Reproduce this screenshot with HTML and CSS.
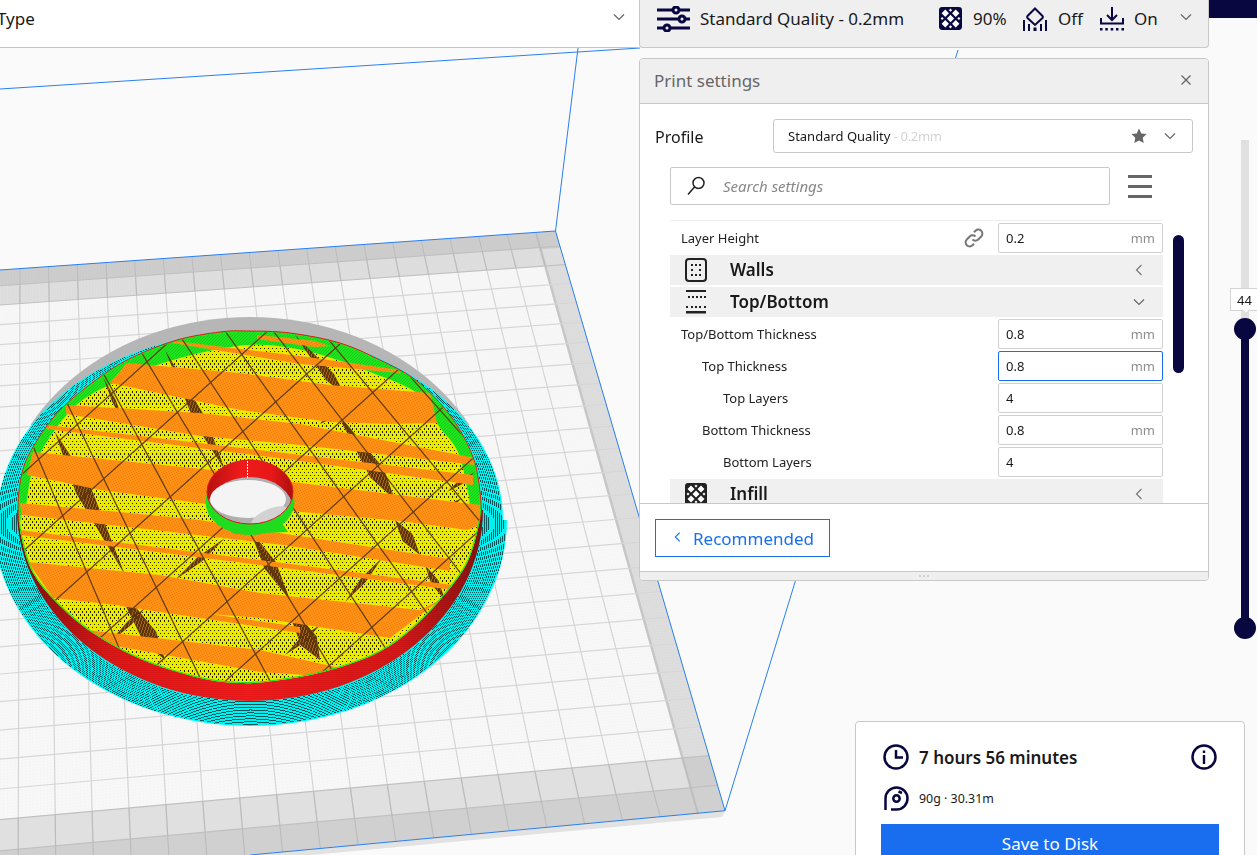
FILE: index.html
```html
<!DOCTYPE html>
<html lang="en">
<head>
<meta charset="utf-8">
<title>Print settings</title>
<link rel="stylesheet" href="styles.css">
</head>
<body>
<canvas id="scene" class="scene" width="1257" height="855"></canvas>

<header class="viewbar">
  <span class="viewbar-label">Type</span>
  <svg class="chev" viewBox="0 0 12 8"><path d="M1 1.500l5 5 5-5"/></svg>
</header>

<div class="corner-block"></div>

<section class="summary">
  <svg class="i-sliders" viewBox="0 0 33 26"><g class="navy-line"><path d="M0 4h15M23 4h10M0 13h21M29 13h4M0 22h6M14 22h19"/><circle cx="19" cy="4" r="3"/><circle cx="25" cy="13" r="3"/><circle cx="10" cy="22" r="3"/></g></svg>
  <span class="summary-profile">Standard Quality - 0.2mm</span>
  <svg class="i-22" viewBox="0 0 22 22"><rect class="navy-fill" width="22" height="22" rx="3"/><path class="white-fill" d="M6 2.500L9.500 6 6 9.500 2.500 6zM16 2.500L19.500 6 16 9.500 12.500 6zM11 7.500l3.500 3.500-3.500 3.500L7.500 11zM6 12.500L9.500 16 6 19.500 2.500 16zM16 12.500l3.500 3.500-3.500 3.500-3.500-3.500zM11 1.500L12.500 3 11 4.500 9.500 3zM11 17.500l1.500 1.500-1.500 1.500L9.500 19zM3 9.500L4.500 11 3 12.500 1.500 11zM19 9.500l1.500 1.500-1.500 1.500-1.500-1.500z"/></svg>
  <span class="summary-val v-infill">90%</span>
  <svg class="i-24" viewBox="0 0 24 24"><g class="navy-line thin"><path d="M12 1.500l7.500 7.500a1.500 1.500 0 0 1 0 2L12 18 4.500 11a1.500 1.500 0 0 1 0-2z"/></g><path class="navy-fill" d="M0 13h2v11H0zM5 17h2v7H5zM10.500 20.500h3V24h-3zM17 17h2v7h-2zM22 13h2v11h-2z"/></svg>
  <span class="summary-val v-support">Off</span>
  <svg class="i-24" viewBox="0 0 24 24"><g class="navy-line thin"><path d="M12 0v12M7 8l5 5 5-5M1 11v5.500h22V11"/></g><path class="navy-fill" d="M0 21h2.500v2.500H0zM5.300 21h2.500v2.500H5.300zM10.700 21h2.500v2.500h-2.500zM16 21h2.500v2.500H16zM21.500 21H24v2.500h-2.500z"/></svg>
  <span class="summary-val v-adhesion">On</span>
  <svg class="chev chev-summary" viewBox="0 0 12 8"><path d="M1 1.500l5 5 5-5"/></svg>
</section>

<section class="panel">
  <div class="panel-head">
    <span class="panel-title">Print settings</span>
    <svg class="close" viewBox="0 0 10 10"><path d="M.5.500l9 9M9.500.500l-9 9"/></svg>
  </div>
  <div class="panel-body">
    <div class="profile-row">
      <span class="profile-label">Profile</span>
      <div class="select">
        <span class="select-name">Standard Quality<span class="select-dim"> - 0.2mm</span></span>
        <svg class="star" viewBox="0 0 16 16"><path d="M8 .6l2.300 4.900 5.300.6-3.900 3.700 1 5.300L8 12.500l-4.700 2.600 1-5.300L.4 6.100l5.300-.6z"/></svg>
        <svg class="chev" viewBox="0 0 12 8"><path d="M1 1.500l5 5 5-5"/></svg>
      </div>
    </div>
    <div class="search-row">
      <div class="search">
        <svg class="i-search" viewBox="0 0 20 20"><circle cx="12.500" cy="7" r="5.500"/><path d="M8.500 11L2 18.500"/></svg>
        <span class="search-hint">Search settings</span>
      </div>
      <div class="menu"><i></i><i></i><i></i></div>
    </div>
    <div class="list-wrap">
      <div class="list">
        <div class="row">
          <span class="row-label">Layer Height</span>
          <svg class="i-link" viewBox="0 0 20 20"><path d="M8.500 11.500a4 4 0 0 0 5.700 0l3-3a4 4 0 0 0-5.700-5.700L10 4.300M11.500 8.500a4 4 0 0 0-5.700 0l-3 3a4 4 0 0 0 5.700 5.700l1.500-1.500"/></svg>
          <div class="field"><span>0.2</span><span class="unit">mm</span></div>
        </div>
        <div class="group">
          <svg class="g-icon" viewBox="0 0 22 24"><rect class="g-frame" x="1" y="1" width="20" height="22" rx="3"/><path class="g-dots" d="M6 6h2v2H6zM10 6h2v2h-2zM14 6h2v2h-2zM6 11h2v2H6zM14 11h2v2h-2zM6 16h2v2H6zM10 16h2v2h-2zM14 16h2v2h-2z"/></svg>
          <span class="group-name">Walls</span>
          <svg class="chev-left" viewBox="0 0 8 12"><path d="M6.500 1l-5 5 5 5"/></svg>
        </div>
        <div class="group">
          <svg class="g-icon" viewBox="0 0 22 24"><path class="g-dots" d="M1 0h20v2H1zM3 6h2v2H3zM7 6h2v2H7zM11 6h2v2h-2zM15 6h2v2h-2zM19 6h2v2h-2zM1 16h2v2H1zM6 16h2v2H6zM10 16h2v2h-2zM14 16h2v2h-2zM19 16h2v2h-2zM1 21h20v2.500H1z"/></svg>
          <span class="group-name">Top/Bottom</span>
          <svg class="chev" viewBox="0 0 12 8"><path d="M1 1.500l5 5 5-5"/></svg>
        </div>
        <div class="row">
          <span class="row-label">Top/Bottom Thickness</span>
          <div class="field"><span>0.8</span><span class="unit">mm</span></div>
        </div>
        <div class="row">
          <span class="row-label indent1">Top Thickness</span>
          <div class="field field-active"><span>0.8</span><span class="unit">mm</span></div>
        </div>
        <div class="row">
          <span class="row-label indent2">Top Layers</span>
          <div class="field"><span>4</span></div>
        </div>
        <div class="row">
          <span class="row-label indent1">Bottom Thickness</span>
          <div class="field"><span>0.8</span><span class="unit">mm</span></div>
        </div>
        <div class="row">
          <span class="row-label indent2">Bottom Layers</span>
          <div class="field"><span>4</span></div>
        </div>
        <div class="group">
          <svg class="g-icon" viewBox="0 0 22 22"><rect class="g-fill" width="22" height="22" rx="3"/><path class="white-fill" d="M6 2.500L9.500 6 6 9.500 2.500 6zM16 2.500L19.500 6 16 9.500 12.500 6zM11 7.500l3.500 3.500-3.500 3.500L7.500 11zM6 12.500L9.500 16 6 19.500 2.500 16zM16 12.500l3.500 3.500-3.500 3.500-3.500-3.500zM11 1.500L12.500 3 11 4.500 9.500 3zM11 17.500l1.500 1.500-1.500 1.500L9.500 19zM3 9.500L4.500 11 3 12.500 1.500 11zM19 9.500l1.500 1.500-1.500 1.500-1.500-1.500z"/></svg>
          <span class="group-name">Infill</span>
          <svg class="chev-left" viewBox="0 0 8 12"><path d="M6.500 1l-5 5 5 5"/></svg>
        </div>
      </div>
      <div class="scrollbar"></div>
    </div>
  </div>
  <div class="panel-foot">
    <div class="rec-btn">
      <svg class="rec-chev" viewBox="0 0 8 12"><path d="M6.500 1l-5 5 5 5"/></svg>
      <span>Recommended</span>
    </div>
  </div>
  <div class="handle"><i></i><i></i><i></i></div>
</section>

<aside class="layer-slider">
  <div class="track-light"></div>
  <div class="track-dark"></div>
  <div class="knob"></div>
  <div class="knob knob-low"></div>
  <div class="layer-tag">44</div>
</aside>

<section class="estimate">
  <div class="est-row">
    <svg class="i-26" viewBox="0 0 26 26"><g class="navy-line thin2"><circle cx="13" cy="13" r="11.500"/><path d="M13 6v7.500h7"/></g></svg>
    <span class="est-time">7 hours 56 minutes</span>
    <svg class="i-26 est-info" viewBox="0 0 26 26"><circle class="navy-line thin2" cx="13" cy="13" r="11.500"/><path class="navy-fill" d="M11.800 6.500h2.400v2.600h-2.400zM11.800 11h2.400v9h-2.400z"/></svg>
  </div>
  <div class="est-row est-row-2">
    <svg class="i-26" viewBox="0 0 26 26"><g class="navy-line thin2"><path d="M2.500 25V13.500A11 11 0 1 1 13.500 24.500H8"/><circle cx="13.500" cy="13.500" r="3.200"/><path d="M15.500 6.500l3.500 1.500"/></g></svg>
    <span class="est-weight">90g · 30.31m</span>
  </div>
  <div class="save-btn">Save to Disk</div>
</section>

<script src="scene.js"></script>
</body>
</html>
```
FILE: styles.css
```css
* { box-sizing: border-box; }
html, body { margin: 0; height: 100%; }
body {
  position: relative;
  width: 1257px;
  height: 855px;
  overflow: hidden;
  background: #fafafa;
  font-family: "Noto Sans", sans-serif;
  color: #191919;
}
svg { display: block; flex: none; }
.scene { position: absolute; left: 0; top: 0; display: block; }

.chev { width: 12px; height: 8px; fill: none; stroke: #666; stroke-width: 1.200; }
.chev-left { width: 8px; height: 12px; fill: none; stroke: #777; stroke-width: 1.200; }
.navy-line { fill: none; stroke: #08073f; stroke-width: 3; }
.navy-line.thin { stroke-width: 2; }
.navy-line.thin2 { stroke-width: 2.500; }
.navy-fill { fill: #08073f; }
.white-fill { fill: #fff; }

.viewbar {
  position: absolute; left: 0; top: 0;
  width: 640px; height: 48px;
  display: flex; justify-content: space-between; align-items: center;
  padding: 0 15px 10px 0;
  background: #fff;
  border-bottom: 1px solid #c4c4c4;
  font-size: 17px;
}
.viewbar-label { margin-left: -3px; }
.viewbar .chev { margin-top: -3px; }
.corner-block { position: absolute; left: 1209px; top: 0; width: 48px; height: 18px; background: #08073f; }

.summary {
  position: absolute; left: 639px; top: 0;
  width: 570px; height: 48px;
  display: flex; align-items: center;
  padding: 0 0 10px 17px;
  background: #efefef;
  border: 1px solid #c8c8c8; border-top: 0;
  border-radius: 0 0 4px 4px;
  font-size: 17px;
}
.i-sliders { width: 33px; height: 26px; }
.summary-profile { margin-left: 10px; width: 239px; }
.i-22 { width: 23px; height: 23px; }
.i-24 { width: 24px; height: 24px; }
.summary-val { margin-left: 11px; }
.v-infill { width: 50px; }
.v-support { width: 42px; }
.v-adhesion { width: 46px; margin-left: 10px; }
.chev-summary { margin-top: -3px; }

.panel {
  position: absolute; left: 639px; top: 58px;
  width: 570px; height: 523px;
  display: flex; flex-direction: column;
  background: #fff;
  border: 1px solid #c8c8c8;
  border-radius: 4px;
  overflow: hidden;
}
.panel-head {
  height: 45px; flex: none;
  display: flex; justify-content: space-between; align-items: center;
  padding: 0 17px 2px 14px;
  background: #efefef;
  border-bottom: 1px solid #c8c8c8;
  font-size: 17px; color: #666;
}
.close { width: 10px; height: 10px; fill: none; stroke: #666; stroke-width: 1.300; }
.panel-body { flex: 1 1 0; min-height: 0; display: flex; flex-direction: column; }
.profile-row { display: flex; align-items: center; padding: 15px 15px 0; }
.profile-label { width: 118px; font-size: 16px; padding-top: 2px; }
.select {
  flex: 1; height: 34px;
  display: flex; align-items: center;
  padding: 0 16px 0 14px;
  border: 1px solid #c8c8c8; border-radius: 3px;
  font-size: 13px;
}
.select-name { flex: 1; }
.select-dim { color: #d4d4d4; letter-spacing: -.3px; }
.star { width: 16px; height: 16px; fill: #666; margin-right: 17px; }

.search-row { display: flex; align-items: center; padding: 14px 0 0 30px; }
.search {
  width: 440px; height: 38px;
  display: flex; align-items: center;
  padding-left: 15px;
  border: 1px solid #c8c8c8; border-radius: 2px;
}
.i-search { width: 20px; height: 20px; fill: none; stroke: #222; stroke-width: 1.500; }
.search-hint { margin-left: 17px; font-size: 15px; font-style: italic; color: #888; }
.menu { margin-left: 18px; width: 24px; display: flex; flex-direction: column; gap: 7px; }
.menu i { display: block; height: 3px; background: #666; }

.list-wrap { flex: 1; min-height: 0; display: flex; margin-top: 15px; padding-left: 30px; }
.list {
  width: 493px; height: 100%;
  display: flex; flex-direction: column;
  overflow: hidden;
  border-top: 1px solid #eee; padding-top: 1px;
}
.scrollbar { width: 11px; height: 138px; margin: 15px 0 0 10px; border-radius: 6px; background: #08073f; }
.row { height: 32px; flex: none; display: flex; align-items: center; font-size: 13px; }
.row-label { flex: 1; padding-left: 11px; color: #222; }
.indent1 { padding-left: 32px; }
.indent2 { padding-left: 53px; }
.i-link { width: 20px; height: 20px; margin-right: 14px; fill: none; stroke: #777; stroke-width: 2; }
.field {
  width: 165px; height: 30px;
  display: flex; justify-content: space-between; align-items: center;
  padding: 0 7px;
  border: 1px solid #d0d0d0; border-radius: 2px;
}
.field-active { border-color: #196ef0; }
.unit { color: #8f8f8f; }
.group {
  height: 30px; flex: none; margin: 1px 0;
  display: flex; align-items: center;
  padding: 0 18px 0 15px;
  background: #f0f0f0;
}
.g-icon { width: 22px; height: 24px; }
.g-frame { fill: none; stroke: #222; stroke-width: 2; }
.g-dots { fill: #222; }
.g-fill { fill: #222; }
.group-name { flex: 1; margin-left: 23px; font-size: 17px; font-weight: 600; line-height: 1; margin-bottom: 2px; }
.group .chev-left { margin-right: 2px; }

.panel-foot {
  height: 68px; flex: none;
  padding: 15px 0 0 15px;
  background: #fff;
  border-top: 1px solid #c8c8c8;
}
.rec-btn {
  width: 175px; height: 38px;
  display: flex; align-items: center;
  padding-left: 18px;
  border: 1px solid #196ef0;
  font-size: 17px; color: #196ef0;
}
.rec-chev { width: 7px; height: 12px; margin: -2px 12px 0 0; fill: none; stroke: #196ef0; stroke-width: 1.300; }
.handle {
  height: 9px; flex: none;
  display: flex; justify-content: center; align-items: center; gap: 2px;
  background: #efefef;
  border-top: 1px solid #c8c8c8;
}
.handle i { width: 2px; height: 2px; background: #d0d0d0; }

.layer-slider { position: absolute; left: 1230px; top: 140px; width: 27px; height: 500px; }
.track-light { position: absolute; left: 11px; top: 0; width: 8px; height: 190px; background: #e0e0e0; }
.track-dark { position: absolute; left: 11px; top: 189px; width: 8px; height: 300px; background: #08073f; }
.knob { position: absolute; left: 4px; top: 178px; width: 22px; height: 22px; border-radius: 50%; background: #08073f; }
.knob-low { top: 477px; }
.layer-tag {
  position: absolute; left: 0; top: 148px;
  width: 30px; height: 23px;
  display: flex; align-items: center; justify-content: center;
  padding-right: 1px;
  background: #fff;
  border: 1px solid #d4d4d4;
  font-size: 13px;
}
.layer-tag::after {
  content: ""; position: absolute; left: 12px; bottom: -3px;
  width: 5px; height: 5px;
  background: #fff;
  border: solid #d4d4d4; border-width: 0 1px 1px 0;
  transform: rotate(45deg);
}

.estimate {
  position: absolute; left: 855px; top: 721px;
  width: 390px; height: 160px;
  padding: 22px 25px 0;
  background: #fff;
  border: 1px solid #c8c8c8; border-radius: 4px;
}
.est-row { display: flex; align-items: center; gap: 10px; height: 26px; }
.est-row-2 { margin-top: 15px; }
.i-26 { width: 26px; height: 26px; margin-left: 2px; }
.est-time { flex: 1; font-size: 17px; font-weight: 600; }
.est-info { margin: 0 2px 0 0; }
.est-weight { font-size: 12.400px; }
.save-btn {
  height: 40px; margin-top: 13px;
  padding-top: 8px;
  text-align: center;
  background: #196ef0; color: #fff;
  font-size: 17px;
}
```
FILE: scene.js
```js
(function () {
  var c = document.getElementById('scene');
  var g = c.getContext('2d', { willReadFrequently: true });
  var W = 1257, H = 855;

  function poly(p, color) {
    g.beginPath();
    g.moveTo(p[0][0], p[0][1]);
    for (var i = 1; i < p.length; i++) g.lineTo(p[i][0], p[i][1]);
    g.closePath();
    if (color) { g.fillStyle = color; g.fill(); }
  }
  function line(x1, y1, x2, y2, color, w) {
    g.strokeStyle = color; g.lineWidth = w || 1;
    g.beginPath(); g.moveTo(x1, y1); g.lineTo(x2, y2); g.stroke();
  }
  function curve(p) {
    var n = p.length;
    g.beginPath();
    g.moveTo(p[0][0], p[0][1]);
    for (var i = 0; i < n; i++) {
      var a = p[(i - 1 + n) % n], b = p[i], d = p[(i + 1) % n], e = p[(i + 2) % n];
      g.bezierCurveTo(b[0] + (d[0] - a[0]) / 6, b[1] + (d[1] - a[1]) / 6,
                      d[0] - (e[0] - b[0]) / 6, d[1] - (e[1] - b[1]) / 6, d[0], d[1]);
    }
    g.closePath();
  }

  /* ---------- background and build plate ---------- */
  g.fillStyle = '#fafafa';
  g.fillRect(0, 0, W, H);

  poly([[-100, 285], [555.5, 231], [725, 810.7], [722, 817], [-100, 893]], '#e2e2e2');

  function kline(k) {
    var tx = 20 + 28.66 * k, bx = 18.3 + 36.9 * k;
    return { t: [tx, 270 - 0.0703 * tx], b: [bx, 819 - 0.0894 * bx] };
  }
  function kx(k, y) {
    var l = kline(k);
    return l.t[0] + (y - l.t[1]) * (l.b[0] - l.t[0]) / (l.b[1] - l.t[1]);
  }
  function hy(n) { return 1 / (4.1425e-4 + 5.05e-6 * n) - 1656; }
  function hline(n) {
    var y = hy(n), x = kx(18, y);
    return { x: x, y: y, s: (y + 1670) / (x - 27600) };
  }
  function hAt(n, x) { var h = hline(n); return h.y + h.s * (x - h.x); }

  g.save();
  poly([[-100, 277], [555.5, 231], [725, 810.7], [-100, 887]]);
  g.clip();
  g.fillStyle = '#dedede';
  g.fillRect(0, 0, W, H);

  function rowBand(n1, n2, color) {
    poly([[-100, hAt(n1, -100)], [900, hAt(n1, 900)], [900, hAt(n2, 900)], [-100, hAt(n2, -100)]], color);
  }
  rowBand(22, 30, '#cdcdcd');
  rowBand(-6, -1, '#d0d0d0');
  rowBand(-1, 0, '#e0e0e0');

  // printable area
  var a = hline(21), b = hline(0);
  poly([[-100, hAt(21, -100)], [a.x, a.y], [b.x, b.y], [-100, hAt(0, -100)]], '#f8f8f8');
  // corner tile
  var m = hline(-1);
  poly([[b.x, b.y], [740, hAt(0, 740)], [740, hAt(-1, 740)], [m.x, m.y]], '#cecece');
  var t = hline(23);
  poly([[t.x, t.y], [600, hAt(23, 600)], [600, hAt(21.900, 600)], [hline(21.900).x, hline(21.900).y]], '#cdcdcd');

  var i, n, l, f;
  // faint subdivision
  for (i = -10; i < 190; i++) {
    if (i % 10 === 0) continue;
    l = kline(i / 10);
    line(l.t[0], l.t[1], l.b[0], l.b[1], 'rgba(0,0,0,0.012)', 1);
  }
  for (i = 0; i < 210; i++) {
    if (i % 10 === 0) continue;
    f = i / 10;
    line(-100, hAt(f, -100), 700, hAt(f, 700), 'rgba(0,0,0,0.012)', 1);
  }
  // main grid
  for (i = -1; i <= 18; i++) {
    l = kline(i);
    var dx = l.b[0] - l.t[0], dy = l.b[1] - l.t[1];
    line(l.t[0] - dx * 0.2, l.t[1] - dy * 0.2, l.b[0] + dx * 0.2, l.b[1] + dy * 0.2, i === 18 ? '#c6c6c6' : '#d4d4d4', i === 18 ? 2.500 : 1.200);
  }
  for (n = -2; n <= 23; n++) {
    line(-100, hAt(n, -100), 900, hAt(n, 900), (n < 1 || n > 20) ? '#c0c0c0' : '#d6d6d6', 1.200);
  }
  // lines over the border bands are darker
  g.save();
  rowBand(21, 30); g.clip();
  for (i = -1; i <= 18; i++) { l = kline(i); line(l.t[0], l.t[1], l.b[0], l.b[1], '#bcbcbc', 1.200); }
  g.restore();
  g.save();
  rowBand(-6, 0); g.clip();
  for (i = -1; i <= 18; i++) {
    l = kline(i);
    dx = l.b[0] - l.t[0]; dy = l.b[1] - l.t[1];
    line(l.b[0] - dx * 0.1, l.b[1] - dy * 0.1, l.b[0] + dx * 0.2, l.b[1] + dy * 0.2, '#bcbcbc', 1.200);
  }
  g.restore();
  g.restore();

  /* ---------- brim, skirt and part ---------- */
  // outer grey ring
  g.save();
  g.beginPath(); g.rect(0, 300, 520, 125); g.clip();
  g.beginPath(); g.ellipse(250, 524, 250, 207, 0, 0, Math.PI * 2);
  g.fillStyle = '#b6b6b6'; g.fill();
  g.restore();

  // skirt: different radii above and below the widest line
  g.beginPath();
  g.ellipse(250, 520, 257, 206, 0, 0, Math.PI);
  g.ellipse(250, 520, 253, 188, 0, Math.PI, Math.PI * 2);
  g.closePath();
  g.fillStyle = 'rgb(0,255,255)'; g.fill();

  // outer wall
  g.beginPath();
  g.ellipse(250, 510, 233, 191, 0, 0, Math.PI);
  g.closePath();
  var wg = g.createLinearGradient(17, 0, 483, 0);
  wg.addColorStop(0, '#7d1212'); wg.addColorStop(0.06, '#a01010'); wg.addColorStop(0.2, '#e41414');
  wg.addColorStop(0.5, '#fa1818'); wg.addColorStop(0.82, '#dc1414'); wg.addColorStop(0.92, '#b21212'); wg.addColorStop(1, '#851010');
  g.fillStyle = wg; g.fill();

  var surf = [[18, 507], [22, 473], [33, 447], [60, 410], [100, 377], [133, 357], [177, 340], [220, 332], [247, 331], [290, 333], [340, 343], [380, 360], [413, 378], [440, 403], [460, 430], [473, 457], [478, 477], [481, 503], [480, 520], [467, 563], [440, 600], [407, 633], [373, 655], [323, 672], [273, 681], [240, 683], [200, 678], [143, 660], [93, 633], [57, 603], [33, 573], [22, 540]];

  var ORANGE = 'rgb(255,144,20)', BROWN = 'rgb(92,52,10)';
  curve(surf);
  g.fillStyle = 'rgb(30,230,30)'; g.fill();
  g.save();
  g.clip();

  // solid infill zone
  var yellow = [[22, 545], [27, 500], [33, 470], [50, 437], [80, 402], [125, 378], [180, 358], [250, 345], [310, 352], [370, 372], [420, 395], [438, 425], [458, 452], [468, 492], [476, 525], [520, 600], [300, 760], [60, 700]];
  curve(yellow); g.fillStyle = 'rgb(234,234,0)'; g.fill();

  // spindle shaped gaps between the infill lines
  function spindle(x1, y1, x2, y2, w, at) {
    var dx = x2 - x1, dy = y2 - y1, q = Math.sqrt(dx * dx + dy * dy);
    var nx = -dy / q * w / 2, ny = dx / q * w / 2;
    var mx = x1 + dx * at, my = y1 + dy * at;
    poly([[x1, y1], [mx + nx, my + ny], [x2, y2], [mx - nx, my - ny]], BROWN);
  }
  [
    [165, 350, 225, 470, 12, 0.6], [103, 377, 125, 425, 4, 0.5],
    [55, 432, 125, 575, 16, 0.4], [113, 580, 165, 660, 16, 0.7],
    [295, 335, 345, 395, 10, 0.7], [335, 410, 395, 500, 16, 0.7],
    [250, 530, 290, 600, 13, 0.5], [283, 597, 320, 660, 18, 0.7],
    [395, 520, 420, 555, 12, 0.5], [425, 565, 445, 600, 8, 0.5],
    [175, 580, 225, 538, 6, 0.5], [107, 645, 145, 608, 5, 0.6],
    [345, 602, 382, 558, 6, 0.5], [285, 655, 320, 625, 6, 0.5],
    [320, 424, 357, 393, 8, 0.3], [447, 492, 475, 472, 5, 0.5], [430, 520, 462, 498, 6, 0.5]
  ].forEach(function (w) { spindle(w[0], w[1], w[2], w[3], w[4], w[5]); });

  // solid skin bands
  [
    [[173, 341], [300, 356], [400, 370], [400, 373], [300, 364], [173, 343]],
    [[257, 335], [315, 341], [330, 346], [315, 347], [257, 339]],
    [[127, 363], [240, 373], [330, 385], [430, 393], [437, 423], [387, 424], [330, 422], [240, 410], [110, 383]],
    [[66, 405], [200, 413], [300, 424], [475, 458], [475, 465], [300, 445], [200, 436], [66, 414]],
    [[47, 425], [293, 454], [473, 475], [473, 485], [293, 460], [47, 429]],
    [[33, 452], [213, 470], [293, 482], [480, 505], [480, 525], [467, 530], [400, 521], [290, 511], [213, 505], [100, 490], [27, 475]],
    [[20, 503], [120, 512], [200, 520], [260, 530], [450, 559], [450, 571], [283, 545], [180, 533], [22, 515]],
    [[20, 530], [260, 560], [453, 585], [453, 590], [260, 565], [20, 535]],
    [[28, 562], [160, 575], [260, 593], [420, 610], [440, 600], [390, 638], [260, 618], [160, 610], [53, 598]],
    [[120, 601], [300, 627], [300, 633], [120, 606]],
    [[87, 630], [260, 650], [340, 668], [320, 676], [260, 672], [110, 645]]
  ].forEach(function (p) { poly(p, ORANGE); });

  // thin cross-hatched infill lines
  var col = 'rgb(100,62,14)';
  for (var x0 = -60; x0 < 560; x0 += 58) {
    var sl = 0.37 + 0.001 * x0;
    line(x0 - sl * 200, 300, x0 + sl * 200, 700, col, 1.300);
  }
  for (var c0 = 260; c0 < 1000; c0 += 78) {
    line(0, c0, 500, c0 - 450, col, 1.300);
  }

  // green rim
  curve(surf);
  g.strokeStyle = 'rgb(30,230,30)'; g.lineWidth = 2; g.stroke();
  g.restore();

  // red perimeter on the far side
  g.save();
  g.beginPath(); g.rect(0, 300, 520, 220); g.clip();
  curve(surf); g.strokeStyle = '#e01818'; g.lineWidth = 1; g.stroke();
  g.restore();

  // pixel textures
  var im = g.getImageData(0, 0, W, H), d = im.data;
  var y, x, p, r, gg, bb;
  for (y = 300; y < 740; y++) {
    for (x = 0; x < 520; x++) {
      p = (y * W + x) * 4; r = d[p]; gg = d[p + 1]; bb = d[p + 2];
      if (r === 234 && gg === 234 && bb === 0) {
        var row = Math.floor(y / 3.100);
        var ox = row % 2 ? 2 : 0;
        if ((x + ox) % 4 === 0 && y - row * 3.100 < 1.400) {
          d[p] = 30; d[p + 1] = 30; d[p + 2] = 0;
        }
      } else if (r === 255 && gg === 144 && bb === 20) {
        if ((x + y * 2) % 5 === 0) { d[p] = 236; d[p + 1] = 128; d[p + 2] = 14; }
      } else if (r === 92 && gg === 52 && bb === 10) {
        if ((x + Math.floor(y / 3)) % 3 === 0) { d[p] = 165; d[p + 1] = 100; d[p + 2] = 24; }
      } else if (r === 30 && gg === 230 && bb === 30) {
        if ((x + y) % 3 === 0) { d[p] = 24; d[p + 1] = 205; d[p + 2] = 24; }
      } else if (r === 0 && gg === 255 && bb === 255) {
        var ex = x - 250, ey = (y - 523) * 1.240;
        var q = Math.sqrt(ex * ex + ey * ey) / 1.870;
        if (q - Math.floor(q) < 0.340) { d[p] = 8; d[p + 1] = 88; d[p + 2] = 94; }
        else { d[p] = 0; d[p + 1] = 240; d[p + 2] = 240; }
      } else if (r > 110 && gg < 30 && bb < 30 && y > 500) {
        if (y % 2 === 0) { d[p] = r * 0.93; }
      }
    }
  }
  g.putImageData(im, 0, 0);

  /* ---------- centre hole ---------- */
  g.fillStyle = 'rgb(30,220,30)';
  g.beginPath(); g.ellipse(250, 502, 44.500, 33, 0, 0, Math.PI * 2); g.fill();
  poly([[220, 520], [280, 520], [288, 532], [234, 534]], 'rgb(30,220,30)');

  g.save();
  g.beginPath(); g.ellipse(250, 492, 43, 32, 0, 0, Math.PI * 2); g.clip();
  var rg = g.createLinearGradient(207, 0, 293, 0);
  rg.addColorStop(0, '#b81010'); rg.addColorStop(0.4, '#f01a1a'); rg.addColorStop(0.75, '#e81818'); rg.addColorStop(1, '#a81010');
  g.fillStyle = rg; g.fillRect(200, 455, 100, 75);
  g.fillStyle = '#b0b0b0';
  g.beginPath(); g.ellipse(250, 510, 43, 33, 0, 0, Math.PI * 2); g.fill();
  g.fillStyle = '#f4f4f4';
  g.beginPath(); g.ellipse(248, 499, 38, 19, 0, 0, Math.PI * 2); g.fill();
  g.fillStyle = '#d2d2d2';
  g.beginPath(); g.ellipse(270, 517, 20, 8, -0.4, 0, Math.PI * 2); g.fill();
  g.restore();
  g.strokeStyle = '#e01818'; g.lineWidth = 1;
  g.beginPath(); g.ellipse(250, 492, 43, 32, 0, 0, Math.PI * 2); g.stroke();
  for (y = 461; y < 478; y += 3) line(247.500, y, 247.500, y + 2, '#ffffff', 1);

  /* ---------- build volume outline ---------- */
  var blue = '#2a7ff0';
  line(0, 89, 640, 48, blue);
  line(578, 48, 555.5, 231, blue);
  line(0, 270, 555.5, 231, blue);
  line(555.5, 231, 725, 810.7, blue);
  line(725, 810.7, 958, 50, blue);
  line(725, 810.7, 250, 855, blue);
})();
```
